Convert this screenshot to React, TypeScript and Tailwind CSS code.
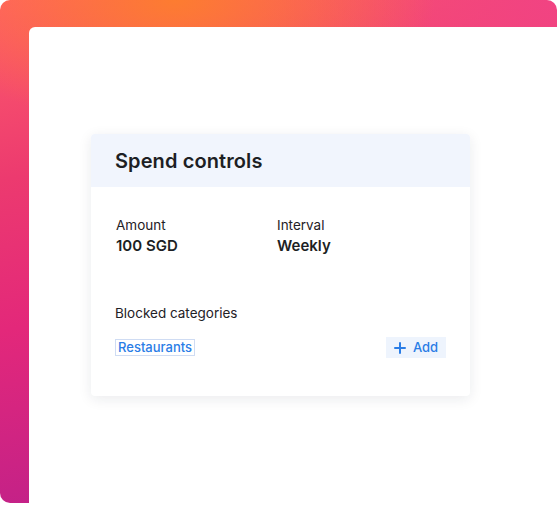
import React from 'react';

const fields = [
  { label: 'Amount', value: '100 SGD' },
  { label: 'Interval', value: 'Weekly' },
];

export default function App() {
  return (
    <div className="w-[560px] h-[505px] bg-white overflow-hidden font-['Inter','Liberation_Sans',sans-serif]">
      {/* Gradient frame with white sheet laid over it */}
      <div className="w-[557px] h-[503px] rounded-[10px] pt-[27px] pl-[29px] bg-[image:radial-gradient(ellipse_260px_130px_at_175px_0px,rgba(253,124,48,1),rgba(253,124,48,0)),radial-gradient(ellipse_300px_200px_at_560px_0px,rgba(241,67,131,1),rgba(241,67,131,0)),linear-gradient(170deg,#ff5e6b_0%,#ec3a6f_30%,#e3287a_55%,#b41e8e_100%)]">
        <div className="w-[531px] h-[478px] bg-white rounded-tl-[6px] pt-[107px] pl-[62px]">
          <div className="w-[379px] bg-white rounded-[4px] shadow-[0_3px_14px_rgba(20,30,60,0.09)] overflow-hidden">
            <div className="h-[53px] bg-[#f1f5fd] flex items-center px-6">
              <h1 className="text-[20px] font-semibold text-[#1d1f24] tracking-[0.1px]">Spend controls</h1>
            </div>
            <div className="pt-[28px] pb-[38px] pl-[25px] pr-[24px]">
              <div className="grid grid-cols-[161px_1fr]">
                {fields.map(({ label, value }) => (
                  <div key={label}>
                    <p className="text-[13.5px] leading-5 text-[#1f2126]">{label}</p>
                    <p className="text-[15px] leading-5 font-semibold text-[#1d1f24] mt-[1px]">{value}</p>
                  </div>
                ))}
              </div>
              <p className="text-[13.5px] leading-5 text-[#1f2126] mt-[47px] -ml-px">Blocked categories</p>
              <div className="flex items-center justify-between mt-[14px]">
                <span className="-ml-px h-[17px] px-[2px] flex items-center border border-[#cfdcf3] text-[13px] font-medium text-[#2a7de6]">
                  Restaurants
                </span>
                <button className="w-[60px] h-[21px] bg-[#eef4fd] flex items-center justify-center gap-[7px] text-[13px] font-medium text-[#2a7de6]">
                  <svg width="12" height="12" viewBox="0 0 12 12" fill="none" stroke="#2a7de6" strokeWidth="2" strokeLinecap="round">
                    <path d="M6 1v10M1 6h10" />
                  </svg>
                  Add
                </button>
              </div>
            </div>
          </div>
        </div>
      </div>
    </div>
  );
}
